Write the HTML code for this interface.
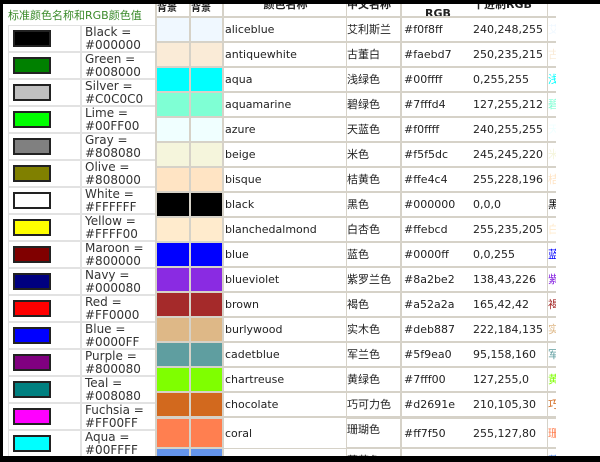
<!DOCTYPE html>
<html style="overflow:hidden;height:462px"><head><meta charset="utf-8"><style>
body{margin:0;width:600px;height:462px;overflow:hidden;background:#fff;position:relative;font-family:"DejaVu Sans","Noto Sans CJK SC",sans-serif;}
.a{position:absolute}
.bar{z-index:10}
.title{left:8px;top:7px;font-size:11px;color:#3a8a2a;font-family:"DejaVu Sans","Noto Sans CJK SC",sans-serif}
.lr{position:absolute;left:6px;width:150px;height:26px}
.lr .c1{position:absolute;left:2px;top:0;width:71px;height:25px;border:1px solid #e2e2e2}
.lr .c2{position:absolute;left:75px;top:0;border:1px solid #e2e2e2;font-size:12px;line-height:13px;color:#333;padding-left:3px;box-sizing:border-box;width:76px;height:27px}
.lr .sw{position:absolute;left:4px;top:4px;width:34px;height:13px;border:2px solid #222}
.tb{position:absolute;left:155px;top:4px;width:401px;height:452px;background:#d6d2c8;overflow:hidden}
.r{position:absolute;left:0;width:401px;height:25px}
.r div{position:absolute;top:1px;height:23px;background:#fff;font-size:11px;line-height:23px;color:#222;white-space:nowrap;overflow:hidden}
.s1{left:2px;width:32px}.s2{left:36px;width:31px}
.n{left:69px;width:121px;padding-left:1px}
.z{left:192px;width:53px}
.h{left:247px;width:68px;padding-left:2px}
.g{left:317px;width:74px;padding-left:1px}
.x{left:393px;width:8px}
</style></head><body>
<div class="a bar" style="left:0;top:0;width:600px;height:4px;background:#000"></div>
<div class="a bar" style="left:0;top:0;width:3px;height:462px;background:#000"></div>
<div class="a title">标准颜色名称和RGB颜色值</div>

<div class="lr" style="top:25px"><div class="c1"><div class="sw" style="background:#000000"></div></div><div class="c2">Black =<br>#000000</div></div>
<div class="lr" style="top:52px"><div class="c1"><div class="sw" style="background:#008000"></div></div><div class="c2">Green =<br>#008000</div></div>
<div class="lr" style="top:79px"><div class="c1"><div class="sw" style="background:#C0C0C0"></div></div><div class="c2">Silver =<br>#C0C0C0</div></div>
<div class="lr" style="top:106px"><div class="c1"><div class="sw" style="background:#00FF00"></div></div><div class="c2">Lime =<br>#00FF00</div></div>
<div class="lr" style="top:133px"><div class="c1"><div class="sw" style="background:#808080"></div></div><div class="c2">Gray =<br>#808080</div></div>
<div class="lr" style="top:160px"><div class="c1"><div class="sw" style="background:#808000"></div></div><div class="c2">Olive =<br>#808000</div></div>
<div class="lr" style="top:187px"><div class="c1"><div class="sw" style="background:#FFFFFF"></div></div><div class="c2">White =<br>#FFFFFF</div></div>
<div class="lr" style="top:214px"><div class="c1"><div class="sw" style="background:#FFFF00"></div></div><div class="c2">Yellow =<br>#FFFF00</div></div>
<div class="lr" style="top:241px"><div class="c1"><div class="sw" style="background:#800000"></div></div><div class="c2">Maroon =<br>#800000</div></div>
<div class="lr" style="top:268px"><div class="c1"><div class="sw" style="background:#000080"></div></div><div class="c2">Navy =<br>#000080</div></div>
<div class="lr" style="top:295px"><div class="c1"><div class="sw" style="background:#FF0000"></div></div><div class="c2">Red =<br>#FF0000</div></div>
<div class="lr" style="top:322px"><div class="c1"><div class="sw" style="background:#0000FF"></div></div><div class="c2">Blue =<br>#0000FF</div></div>
<div class="lr" style="top:349px"><div class="c1"><div class="sw" style="background:#800080"></div></div><div class="c2">Purple =<br>#800080</div></div>
<div class="lr" style="top:376px"><div class="c1"><div class="sw" style="background:#008080"></div></div><div class="c2">Teal =<br>#008080</div></div>
<div class="lr" style="top:403px"><div class="c1"><div class="sw" style="background:#FF00FF"></div></div><div class="c2">Fuchsia =<br>#FF00FF</div></div>
<div class="lr" style="top:430px"><div class="c1"><div class="sw" style="background:#00FFFF"></div></div><div class="c2">Aqua =<br>#00FFFF</div></div>

<div class="tb">
<div class="r" style="top:-4px;height:17px"><div class="s1" style="height:15px;line-height:15px;font-weight:bold;font-size:10px">背景</div><div class="s2" style="height:15px;line-height:15px;font-weight:bold;font-size:10px">背景</div><div class="n" style="height:15px;line-height:8px;font-weight:bold;text-align:center">颜色名称</div><div class="z" style="height:15px;line-height:8px;font-weight:bold">中文名称</div><div class="h" style="height:15px;line-height:26px;font-weight:bold;text-align:center">RGB</div><div class="g" style="height:15px;line-height:8px;font-weight:bold">十进制RGB</div><div class="x" style="height:15px"></div></div>
<div class="r" style="top:13px"><div class="s1" style="background:#f0f8ff"></div><div class="s2" style="background:#f0f8ff"></div><div class="n">aliceblue</div><div class="z">艾利斯兰</div><div class="h">#f0f8ff</div><div class="g">240,248,255</div><div class="x" style="color:#f0f8ff">艾</div></div>
<div class="r" style="top:38px"><div class="s1" style="background:#faebd7"></div><div class="s2" style="background:#faebd7"></div><div class="n">antiquewhite</div><div class="z">古董白</div><div class="h">#faebd7</div><div class="g">250,235,215</div><div class="x" style="color:#faebd7">古</div></div>
<div class="r" style="top:63px"><div class="s1" style="background:#00ffff"></div><div class="s2" style="background:#00ffff"></div><div class="n">aqua</div><div class="z">浅绿色</div><div class="h">#00ffff</div><div class="g">0,255,255</div><div class="x" style="color:#00ffff">浅</div></div>
<div class="r" style="top:88px"><div class="s1" style="background:#7fffd4"></div><div class="s2" style="background:#7fffd4"></div><div class="n">aquamarine</div><div class="z">碧绿色</div><div class="h">#7fffd4</div><div class="g">127,255,212</div><div class="x" style="color:#7fffd4">碧</div></div>
<div class="r" style="top:113px"><div class="s1" style="background:#f0ffff"></div><div class="s2" style="background:#f0ffff"></div><div class="n">azure</div><div class="z">天蓝色</div><div class="h">#f0ffff</div><div class="g">240,255,255</div><div class="x" style="color:#f0ffff">天</div></div>
<div class="r" style="top:138px"><div class="s1" style="background:#f5f5dc"></div><div class="s2" style="background:#f5f5dc"></div><div class="n">beige</div><div class="z">米色</div><div class="h">#f5f5dc</div><div class="g">245,245,220</div><div class="x" style="color:#f5f5dc">米</div></div>
<div class="r" style="top:163px"><div class="s1" style="background:#ffe4c4"></div><div class="s2" style="background:#ffe4c4"></div><div class="n">bisque</div><div class="z">桔黄色</div><div class="h">#ffe4c4</div><div class="g">255,228,196</div><div class="x" style="color:#ffe4c4">桔</div></div>
<div class="r" style="top:188px"><div class="s1" style="background:#000000"></div><div class="s2" style="background:#000000"></div><div class="n">black</div><div class="z">黑色</div><div class="h">#000000</div><div class="g">0,0,0</div><div class="x" style="color:#000">黑</div></div>
<div class="r" style="top:213px"><div class="s1" style="background:#ffebcd"></div><div class="s2" style="background:#ffebcd"></div><div class="n">blanchedalmond</div><div class="z">白杏色</div><div class="h">#ffebcd</div><div class="g">255,235,205</div><div class="x" style="color:#ffebcd">白</div></div>
<div class="r" style="top:238px"><div class="s1" style="background:#0000ff"></div><div class="s2" style="background:#0000ff"></div><div class="n">blue</div><div class="z">蓝色</div><div class="h">#0000ff</div><div class="g">0,0,255</div><div class="x" style="color:#0000ff">蓝</div></div>
<div class="r" style="top:263px"><div class="s1" style="background:#8a2be2"></div><div class="s2" style="background:#8a2be2"></div><div class="n">blueviolet</div><div class="z">紫罗兰色</div><div class="h">#8a2be2</div><div class="g">138,43,226</div><div class="x" style="color:#8a2be2">紫</div></div>
<div class="r" style="top:288px"><div class="s1" style="background:#a52a2a"></div><div class="s2" style="background:#a52a2a"></div><div class="n">brown</div><div class="z">褐色</div><div class="h">#a52a2a</div><div class="g">165,42,42</div><div class="x" style="color:#a52a2a">褐</div></div>
<div class="r" style="top:313px"><div class="s1" style="background:#deb887"></div><div class="s2" style="background:#deb887"></div><div class="n">burlywood</div><div class="z">实木色</div><div class="h">#deb887</div><div class="g">222,184,135</div><div class="x" style="color:#deb887">实</div></div>
<div class="r" style="top:338px"><div class="s1" style="background:#5f9ea0"></div><div class="s2" style="background:#5f9ea0"></div><div class="n">cadetblue</div><div class="z">军兰色</div><div class="h">#5f9ea0</div><div class="g">95,158,160</div><div class="x" style="color:#5f9ea0">军</div></div>
<div class="r" style="top:363px"><div class="s1" style="background:#7fff00"></div><div class="s2" style="background:#7fff00"></div><div class="n">chartreuse</div><div class="z">黄绿色</div><div class="h">#7fff00</div><div class="g">127,255,0</div><div class="x" style="color:#7fff00">黄</div></div>
<div class="r" style="top:388px"><div class="s1" style="background:#d2691e"></div><div class="s2" style="background:#d2691e"></div><div class="n">chocolate</div><div class="z">巧可力色</div><div class="h">#d2691e</div><div class="g">210,105,30</div><div class="x" style="color:#d2691e">巧</div></div>
<div class="r" style="top:413px;height:31px"><div class="s1" style="background:#ff7f50;height:28px;top:2px"></div><div class="s2" style="background:#ff7f50;height:28px;top:2px"></div><div class="n" style="height:30px;line-height:32px">coral</div><div class="z" style="height:28px;top:2px;line-height:22px">珊瑚色</div><div class="h" style="height:28px;top:2px;line-height:30px">#ff7f50</div><div class="g" style="height:28px;top:2px;line-height:30px">255,127,80</div><div class="x" style="color:#ff7f50;height:28px;top:2px;line-height:30px">珊</div></div>
<div class="r" style="top:444px"><div class="s1" style="background:#6495ed"></div><div class="s2" style="background:#6495ed"></div><div class="n">cornflowerblue</div><div class="z">菜花色</div><div class="h">#6495ed</div><div class="g">100,149,237</div><div class="x" style="color:#6495ed">菜</div></div>
</div>
<div class="a bar" style="left:0;top:456px;width:600px;height:6px;background:#000"></div>
</body></html>
